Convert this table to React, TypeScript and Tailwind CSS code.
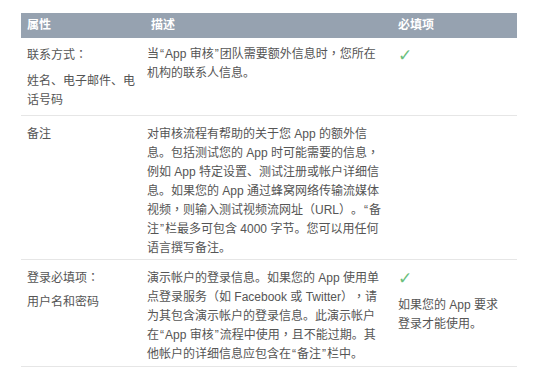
import React from "react";

const font = { fontFamily: '"Liberation Sans", "Noto Sans CJK SC", sans-serif' };
const tc = { fontFamily: '"Liberation Sans", "Noto Sans CJK TC", sans-serif' };

function T({ children }: { children: string }) {
  const parts = children.split(/([，：“”])/);
  return (
    <>
      {parts.map((p, i) => {
        if (p === "，" || p === "：")
          return (
            <span key={i} style={tc}>
              {p}
            </span>
          );
        if (p === "“" || p === "”")
          return (
            <span key={i} className="mx-[1px]">
              {p}
            </span>
          );
        return <React.Fragment key={i}>{p}</React.Fragment>;
      })}
    </>
  );
}

function Check() {
  return (
    <span className="block h-[19px] text-[17px] leading-[19px] text-[#6cbf7e]" style={{ fontFamily: '"DejaVu Sans", sans-serif' }}>
      ✓
    </span>
  );
}

export default function App() {
  return (
    <div className="w-[538px] h-[367px] bg-white text-[#555] text-[12px] leading-[19px] [text-spacing-trim:space-all]" style={font}>
      <div className="pt-[13px] pl-[21px]">
        <div className="w-[496px]">
          <div className="grid grid-cols-[120px_251px_125px] h-[25px] bg-[#96a2b0] text-white font-bold items-center">
            <div className="pl-[6px]">属性</div>
            <div className="pl-[10px]">描述</div>
            <div className="pl-[6px]">必填项</div>
          </div>

          <div className="grid grid-cols-[120px_251px_125px] border-b border-[#e6e6e6]">
            <div className="pl-[6px] pr-[4px] pt-[8px] pb-[5px]">
              <p><T>联系方式：</T></p>
              <p className="mt-[7px]"><T>姓名、电子邮件、电话号码</T></p>
            </div>
            <div className="pl-[6px] pr-[6px] pt-[7px]">
              <p><T>当“App 审核”团队需要额外信息时，您所在机构的联系人信息。</T></p>
            </div>
            <div className="pl-[6px] pr-[12px] pt-[8px]">
              <Check />
            </div>
          </div>

          <div className="grid grid-cols-[120px_251px_125px] border-b border-[#e6e6e6]">
            <div className="pl-[6px] pr-[4px] pt-[9px]">
              <p>备注</p>
            </div>
            <div className="pl-[6px] pr-[6px] pt-[9px] pb-[1px]">
              <p><T>对审核流程有帮助的关于您 App 的额外信息。包括测试您的 App 时可能需要的信息，例如 App 特定设置、测试注册或帐户详细信息。如果您的 App 通过蜂窝网络传输流媒体视频，则输入测试视频流网址（URL）。“备注”栏最多可包含 4000 字节。您可以用任何语言撰写备注。</T></p>
            </div>
            <div className="pl-[6px] pr-[12px] pt-[9px]"></div>
          </div>

          <div className="grid grid-cols-[120px_251px_125px] border-b border-[#e6e6e6]">
            <div className="pl-[6px] pr-[4px] pt-[9px]">
              <p><T>登录必填项：</T></p>
              <p className="mt-[5px]">用户名和密码</p>
            </div>
            <div className="pl-[6px] pr-[6px] pt-[9px] pb-[2px]">
              <p><T>演示帐户的登录信息。如果您的 App 使用单点登录服务（如 Facebook 或 Twitter），请为其包含演示帐户的登录信息。此演示帐户在“App 审核”流程中使用，且不能过期。其他帐户的详细信息应包含在“备注”栏中。</T></p>
            </div>
            <div className="pl-[6px] pr-[12px] pt-[9px]">
              <Check />
              <p className="mt-[8px]">如果您的 App 要求登录才能使用。</p>
            </div>
          </div>
        </div>
      </div>
    </div>
  );
}
